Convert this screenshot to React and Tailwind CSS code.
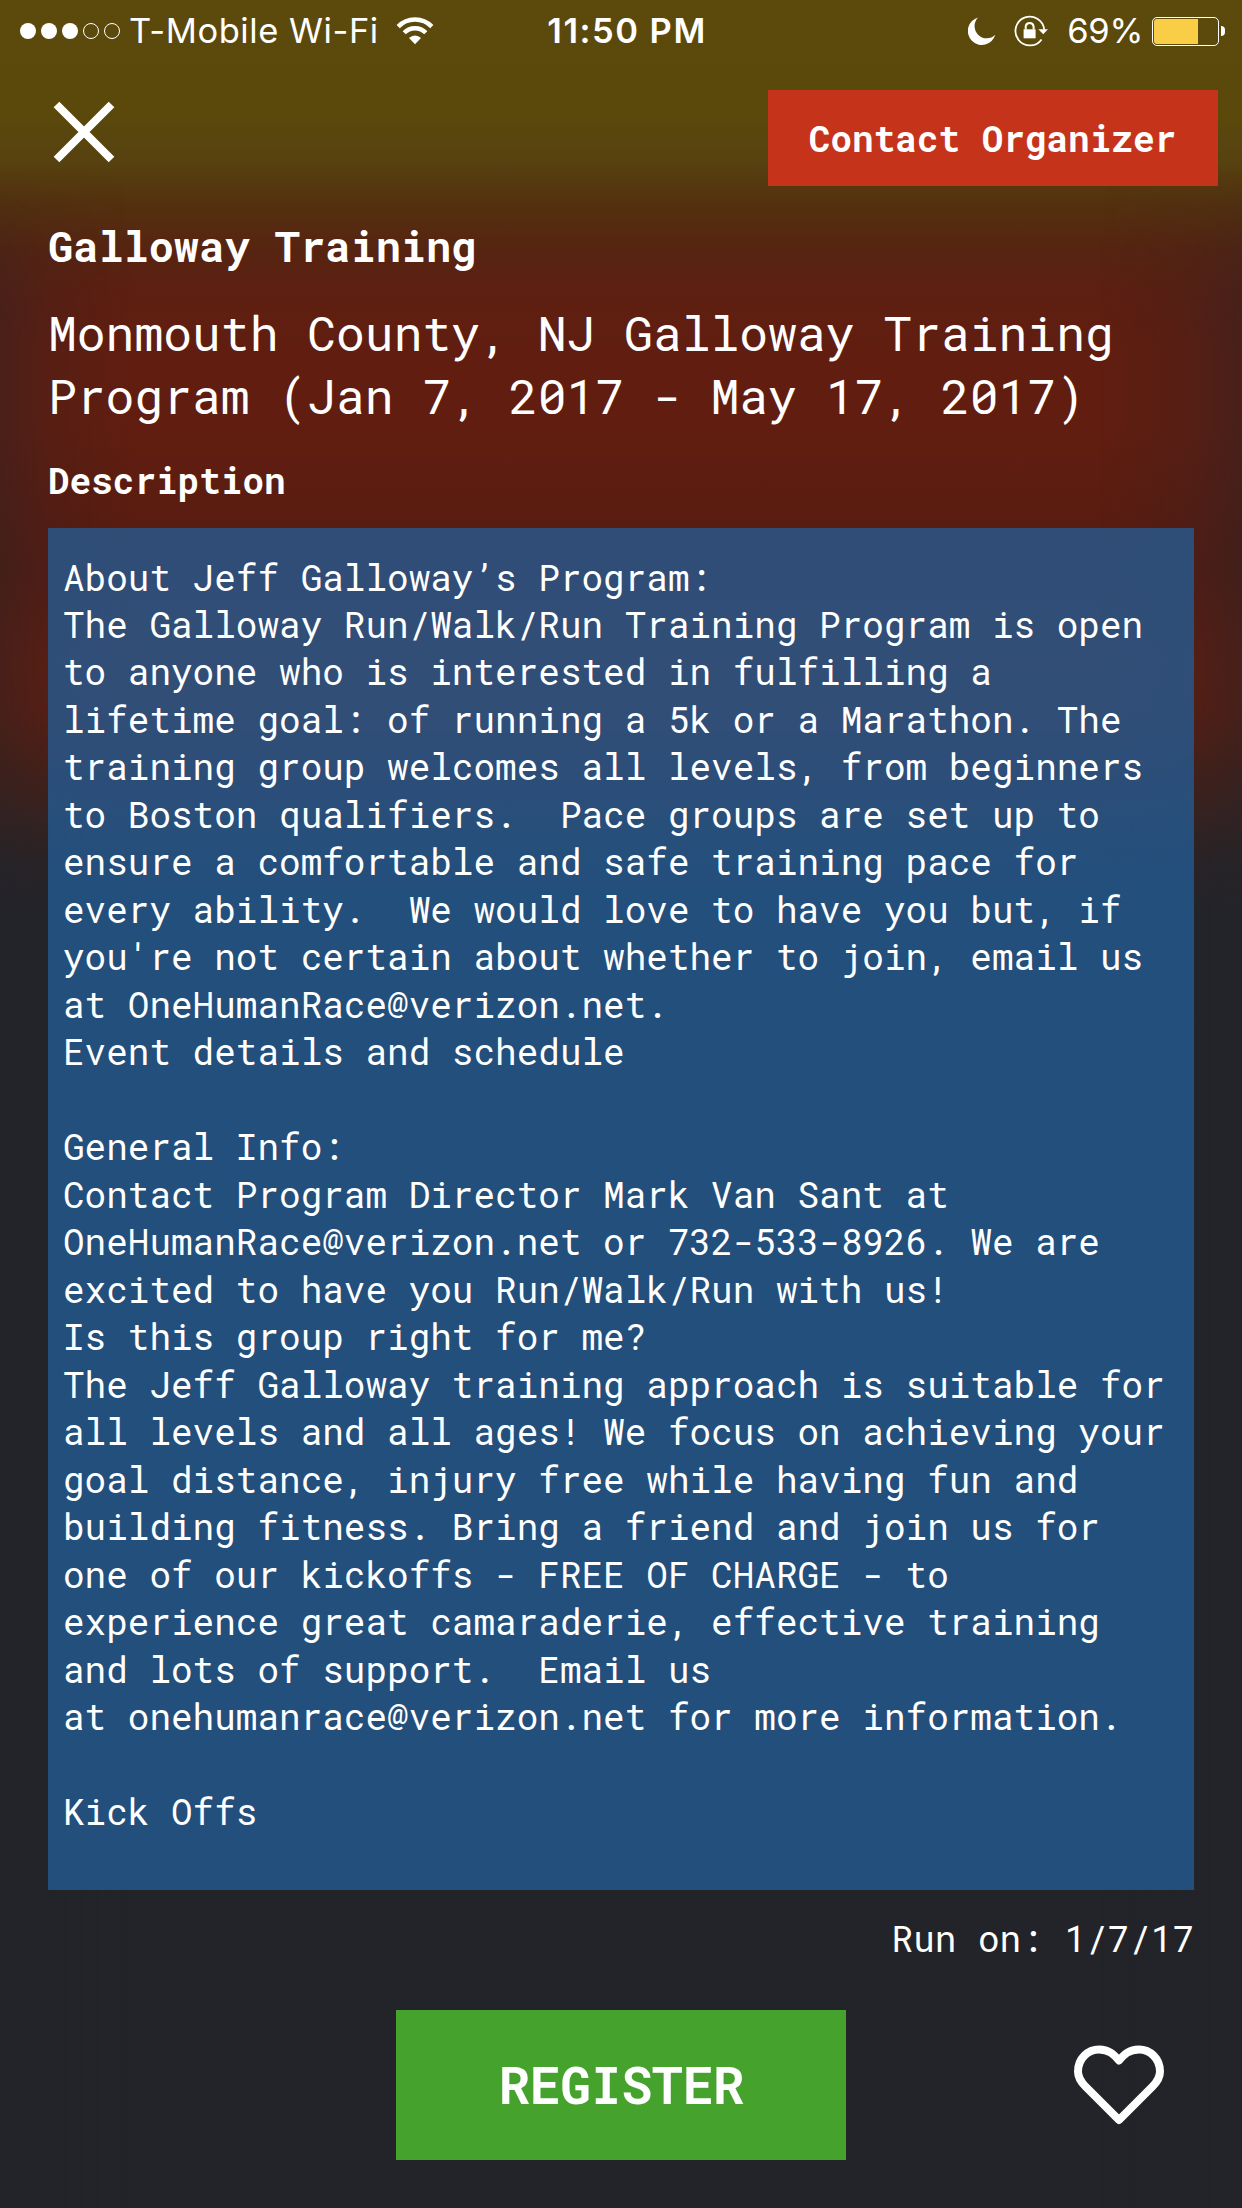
const DESCRIPTION = `About Jeff Galloway’s Program:
The Galloway Run/Walk/Run Training Program is open
to anyone who is interested in fulfilling a
lifetime goal: of running a 5k or a Marathon. The
training group welcomes all levels, from beginners
to Boston qualifiers.  Pace groups are set up to
ensure a comfortable and safe training pace for
every ability.  We would love to have you but, if
you're not certain about whether to join, email us
at OneHumanRace@verizon.net.
Event details and schedule

General Info:
Contact Program Director Mark Van Sant at
OneHumanRace@verizon.net or 732-533-8926. We are
excited to have you Run/Walk/Run with us!
Is this group right for me?
The Jeff Galloway training approach is suitable for
all levels and all ages! We focus on achieving your
goal distance, injury free while having fun and
building fitness. Bring a friend and join us for
one of our kickoffs - FREE OF CHARGE - to
experience great camaraderie, effective training
and lots of support.  Email us
at onehumanrace@verizon.net for more information.

Kick Offs`;

function SignalDots() {
  return (
    <div className="flex gap-[5px]">
      <span className="size-4 rounded-full bg-white" />
      <span className="size-4 rounded-full bg-white" />
      <span className="size-4 rounded-full bg-white" />
      <span className="size-4 rounded-full border border-white" />
      <span className="size-4 rounded-full border border-white" />
    </div>
  );
}

function WifiIcon() {
  return (
    <svg className="-mt-px ml-[17px] h-7 w-[38px]" viewBox="0 0 38 28" fill="none">
      <path d="M2.2 9.6a23.4 23.4 0 0 1 33.6 0" stroke="white" strokeWidth="4.4" />
      <path d="M8.2 15.8a15 15 0 0 1 21.6 0" stroke="white" strokeWidth="4.4" />
      <path d="M19 27.2l-6-6.2a8.4 8.4 0 0 1 12 0z" fill="white" />
    </svg>
  );
}

function MoonIcon() {
  return (
    <svg className="h-7 w-[28px]" viewBox="0 0 28 28">
      <path d="M10.2.4A14 14 0 1 0 27.3 17.8 11.8 11.8 0 0 1 10.2.4z" fill="white" />
    </svg>
  );
}

function RotationLockIcon() {
  return (
    <svg className="ml-[18px] h-8 w-[36px]" viewBox="0 0 36 32" fill="none">
      <path d="M30.2 14.6A14.4 14.4 0 1 0 27.6 24.4" stroke="white" strokeWidth="1.8" />
      <path d="M24.4 14.2h9.6l-4.8 5z" fill="white" />
      <rect x="9.6" y="14.3" width="12" height="9" fill="white" />
      <path d="M11.7 14.5v-3.2a4 4 0 0 1 7.9 0v3.2" stroke="white" strokeWidth="2" />
    </svg>
  );
}

function Battery() {
  return (
    <div className="ml-[9px] flex items-center">
      <div className="h-[29px] w-[67px] rounded-[5px] border border-white p-px">
        <div className="h-full w-[44px] rounded-l-[3px] bg-[#f9ce46]" />
      </div>
      <span className="ml-[2px] h-[10px] w-1 rounded-r-full bg-white" />
    </div>
  );
}

function StatusBar() {
  return (
    <header className="grid h-[62px] grid-cols-[1fr_auto_1fr] items-center pr-[17px] pl-5 font-[Inter,sans-serif] text-[34.5px] leading-none">
      <div className="flex items-center">
        <SignalDots />
        <span className="mt-px ml-[9px] tracking-[0.55px]">T-Mobile Wi-Fi</span>
        <WifiIcon />
      </div>
      <span className="mt-px ml-[9px] font-semibold tracking-[1.5px]">11:50 PM</span>
      <div className="flex items-center justify-end">
        <MoonIcon />
        <RotationLockIcon />
        <span className="mt-px ml-[17px] tracking-[-0.3px]">69%</span>
        <Battery />
      </div>
    </header>
  );
}

export default function App() {
  return (
    <div className="h-[2208px] w-[1242px] bg-[#232429] font-['Roboto_Mono',monospace] text-white">
      <div className="h-full bg-[linear-gradient(to_bottom,#5c4a0c_0px,#5b490b_110px,#574210_160px,#54300f_205px,#572411_250px,#5d1f11_295px,#611e10_345px,#611e10_430px,#591c11_530px,#561c12_570px,#5f1e11_660px,#5d1e11_710px,#4c1f16_765px,#382220_820px,#292327_865px,#232429_910px,#232429_2208px)]">
        <div className="h-full bg-[linear-gradient(to_right,rgba(35,36,41,0.36),rgba(35,36,41,0.16)_45px,transparent_130px,transparent_1100px,rgba(35,36,41,0.18)_1190px,rgba(35,36,41,0.4))] [mask-image:linear-gradient(to_bottom,transparent_170px,black_310px)]" />
      </div>
      <div className="relative -mt-[2208px] flex h-[2208px] flex-col">
        <StatusBar />
        <div className="flex h-[124px] items-end justify-between pr-6 pl-[51px]">
          <button className="mb-[21px]" aria-label="Close">
            <svg className="size-[66px]" viewBox="0 0 66 66" fill="none" stroke="white" strokeWidth="8">
              <path d="M5.5 5.5l55 55M60.5 5.5l-55 55" />
            </svg>
          </button>
          <button className="h-24 w-[450px] bg-[#c6331b] pr-px text-[36px] font-bold">Contact Organizer</button>
        </div>
        <main className="flex flex-col px-12">
          <h1 className="mt-[32px] text-[42px] leading-[56px] font-bold">Galloway Training</h1>
          <h2 className="mt-[27px] text-[48px] leading-[63px] whitespace-pre">{"Monmouth County, NJ Galloway Training\nProgram (Jan 7, 2017 - May 17, 2017)"}</h2>
          <h3 className="mt-[29px] text-[36px] leading-[48px] font-bold">Description</h3>
          <section className="mt-[24px] h-[1362px] bg-[rgba(36,93,151,0.76)] pt-[25.5px] pl-[15px]">
            <p className="text-[36px] leading-[47.48px] whitespace-pre">{DESCRIPTION}</p>
          </section>
          <p className="mt-[24px] text-right text-[36px] leading-[48px]">Run on: 1/7/17</p>
        </main>
        <footer className="mt-[48px] grid grid-cols-[1fr_450px_1fr] items-center">
          <button className="col-start-2 h-[150px] bg-[#44a22d] pl-px text-[51px] font-bold">REGISTER</button>
          <button className="mr-[77px] justify-self-end" aria-label="Favorite">
            <svg className="h-[82px] w-[92px]" viewBox="0 0 92 82" fill="none" stroke="white" strokeWidth="8" strokeLinejoin="round" strokeLinecap="round">
              <path d="M46 76L12.5 42.5C8 38 5 33 5 27.5 5 14.5 15 5.5 26 5.5 36 5.5 41 10.5 46 16.5 51 10.5 56 5.5 66 5.5 77 5.5 87 14.5 87 27.5 87 33 84 38 79.5 42.5Z" />
            </svg>
          </button>
        </footer>
      </div>
    </div>
  );
}
